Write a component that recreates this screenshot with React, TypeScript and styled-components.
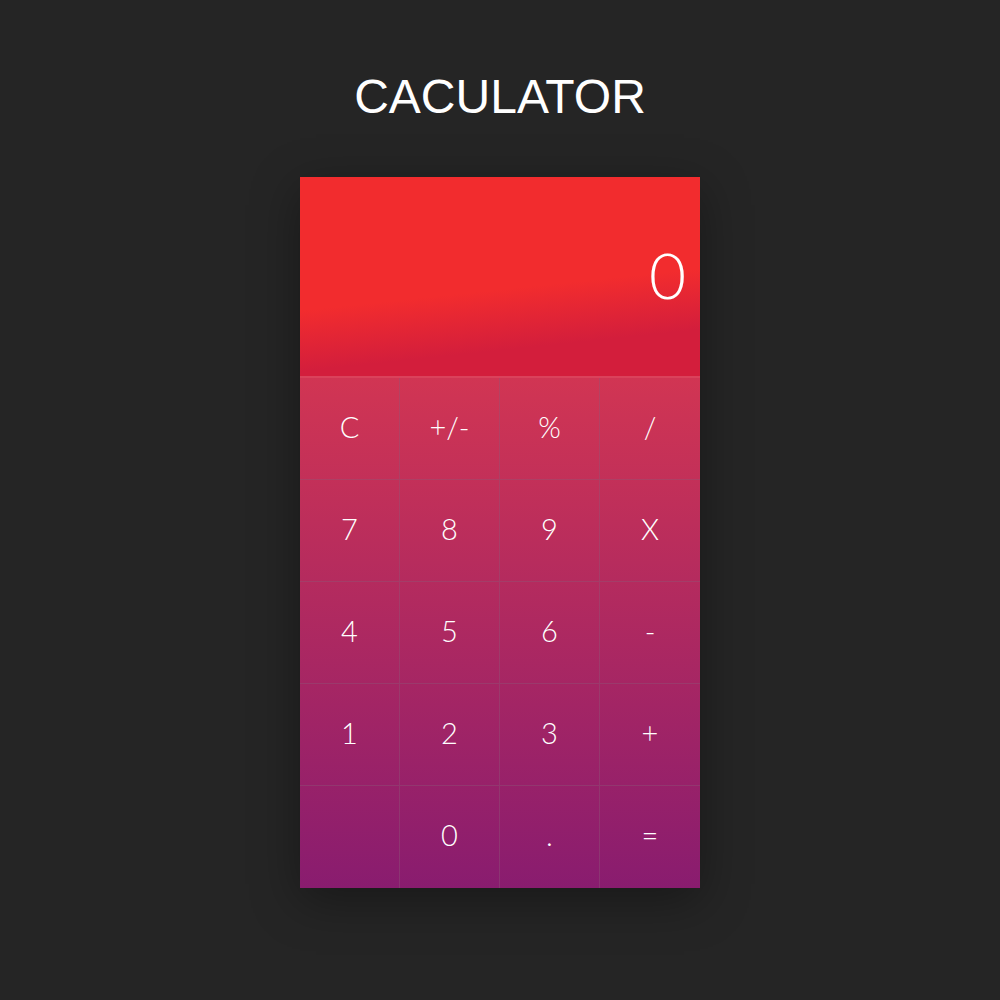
import styled, { createGlobalStyle } from 'styled-components';

const KEYS = [
  'C', '+/-', '%', '/',
  '7', '8', '9', 'X',
  '4', '5', '6', '-',
  '1', '2', '3', '+',
  '', '0', '.', '=',
];

const GlobalStyle = createGlobalStyle`
  html, body {
    margin: 0;
    background: #252525;
  }
`;

const App = () => {
  return (
    <Page>
      <GlobalStyle />
      <Title>CACULATOR</Title>
      <Calculator>
        <Display>
          <Value>0</Value>
        </Display>
        <Keypad>
          {KEYS.map((key, i) => (
            <Key key={i} $lastCol={i % 4 === 3} $lastRow={i >= 16}>
              {key}
            </Key>
          ))}
        </Keypad>
      </Calculator>
    </Page>
  );
};

export default App;

const Page = styled.main`
  min-height: 1000px;
  display: flex;
  flex-direction: column;
  align-items: center;
  padding-top: 70px;
  box-sizing: border-box;
`;

const Title = styled.h1`
  margin: 0 0 53px;
  font-family: 'Liberation Sans', Arial, sans-serif;
  font-weight: 400;
  font-size: 48px;
  line-height: 54px;
  color: #ffffff;
`;

const Calculator = styled.section`
  width: 400px;
  box-shadow: 0 12px 45px rgba(0, 0, 0, 0.35);
  font-family: Lato, 'Open Sans', sans-serif;
  color: #ffffff;
`;

const Display = styled.div`
  height: 201px;
  display: flex;
  align-items: center;
  justify-content: flex-end;
  padding: 0 14px 0 0;
  box-sizing: border-box;
  border-bottom: 2px solid rgba(255, 255, 255, 0.16);
  background: linear-gradient(174deg, #f22c2e 55%, #d31e3c 80%) border-box;
`;

const Value = styled.span`
  font-size: 64px;
  font-weight: 300;
  line-height: 1;
  margin-top: -4px;
`;

const Keypad = styled.div`
  display: grid;
  grid-template-columns: repeat(4, 100px);
  grid-auto-rows: 102px;
  background: linear-gradient(to bottom, #d13553, #891c6f);
`;

const Key = styled.button<{ $lastCol: boolean; $lastRow: boolean }>`
  all: unset;
  box-sizing: border-box;
  display: flex;
  align-items: center;
  justify-content: center;
  padding-bottom: 5px;
  font-family: Lato, 'Open Sans', sans-serif;
  font-size: 29px;
  font-weight: 300;
  color: #ffffff;
  border-right: ${p => (p.$lastCol ? 'none' : '1px solid rgba(140, 90, 120, 0.4)')};
  border-bottom: ${p => (p.$lastRow ? 'none' : '1px solid rgba(140, 90, 120, 0.4)')};
`;
